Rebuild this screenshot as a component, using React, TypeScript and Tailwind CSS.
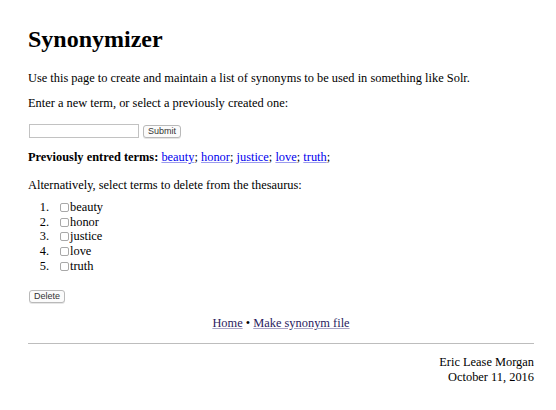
import { useState } from "react";

const terms = ["beauty", "honor", "justice", "love", "truth"];

const buttonCls =
  "h-[13px] rounded-[3px] border border-[#b9b9b9] bg-[#fbfbfb] px-[4px] font-['Liberation_Sans',sans-serif] text-[9px] leading-none text-[#333] shadow-[0_1px_0_#e6e6e6]";

export default function App() {
  const [term, setTerm] = useState("");
  const [checked, setChecked] = useState<Record<string, boolean>>({});

  return (
    <div className="min-h-[410px] bg-white pl-[28px] pr-[22px] pt-[25px] font-['Liberation_Serif',serif] text-[12.4px] leading-[15px] text-black">
      <h1 className="mb-[18px] text-[24px] font-bold leading-[28px]">Synonymizer</h1>

      <p className="mb-[10px]">
        Use this page to create and maintain a list of synonyms to be used in something like Solr.
      </p>

      <p className="mb-[13px]">Enter a new term, or select a previously created one:</p>

      <form className="mb-[12px] flex h-[14px] items-center gap-[4px] pl-[1px]" onSubmit={(e) => e.preventDefault()}>
        <input
          value={term}
          onChange={(e) => setTerm(e.target.value)}
          className="h-[14px] w-[110px] border border-[#c2c2c2] bg-white px-1 text-[11px] outline-none"
        />
        <button type="submit" className={buttonCls}>
          Submit
        </button>
      </form>

      <p className="mb-[13px]">
        <b>Previously entred terms:</b>{" "}
        {terms.map((t) => (
          <span key={t}>
            <a href="#" className="text-[#0000ee] underline decoration-[#9a9aee]">
              {t}
            </a>
            ;{" "}
          </span>
        ))}
      </p>

      <p className="mb-[7px]">Alternatively, select terms to delete from the thesaurus:</p>

      <ol className="mb-[14px]">
        {terms.map((t, i) => (
          <li key={t} className="flex h-[14.75px] items-center">
            <span className="w-[21px] text-right">{i + 1}.</span>
            <label className="ml-[11px] flex items-center">
              <input
                type="checkbox"
                checked={!!checked[t]}
                onChange={(e) => setChecked({ ...checked, [t]: e.target.checked })}
                className="mr-[1px] h-[9px] w-[9px] appearance-none rounded-[2px] border border-[#a8a8a8] bg-white"
              />
              {t}
            </label>
          </li>
        ))}
      </ol>

      <button className={`${buttonCls} ml-[1px]`}>Delete</button>

      <div className="mt-[13px] text-center">
        <a href="#" className="text-[#2a1a5e] underline decoration-[#a9a3c4]">
          Home
        </a>{" "}
        •{" "}
        <a href="#" className="text-[#2a1a5e] underline decoration-[#a9a3c4]">
          Make synonym file
        </a>
      </div>

      <hr className="mt-[12px] border-t border-[#bdbdbd]" />

      <div className="mt-[11px] text-right">
        Eric Lease Morgan
        <br />
        October 11, 2016
      </div>
    </div>
  );
}
